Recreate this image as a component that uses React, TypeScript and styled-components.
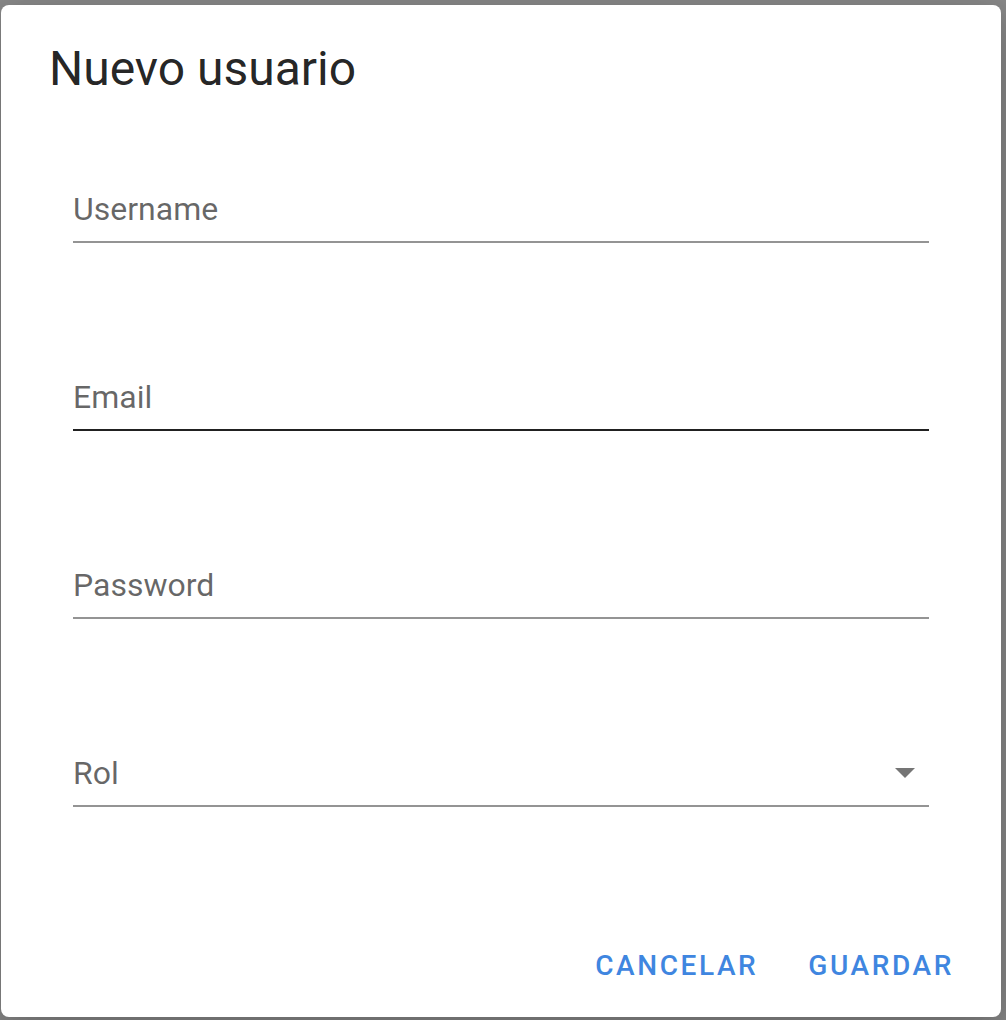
import React from "react";
import styled, { createGlobalStyle } from "styled-components";

const GlobalStyle = createGlobalStyle`
  html, body {
    margin: 0;
    padding: 0;
    background: #8b8b8b;
    font-family: Roboto, "Liberation Sans", Arial, sans-serif;
  }
  * { box-sizing: border-box; }
`;

const Backdrop = styled.div`
  width: 1006px;
  height: 1020px;
  padding: 5px 5px 3px 1px;
  background: #8b8b8b;
  overflow: hidden;
`;

const Dialog = styled.div`
  width: 1000px;
  height: 1012px;
  background: #ffffff;
  border-radius: 8px;
  display: flex;
  flex-direction: column;
  box-shadow: 0 22px 70px 6px rgba(0, 0, 0, 0.14), 0 8px 30px 6px rgba(0, 0, 0, 0.12);
`;

const Title = styled.h2`
  margin: 0;
  padding: 36px 48px 0;
  font-size: 48px;
  line-height: 56px;
  font-weight: 400;
  color: rgba(0, 0, 0, 0.87);
`;

const Content = styled.div`
  padding: 93px 72px 0;
  display: flex;
  flex-direction: column;
  gap: 135px;
`;

const Field = styled.div<{ $active?: boolean }>`
  display: flex;
  align-items: center;
  padding-bottom: 13px;
  border-bottom: 2px solid ${(p) => (p.$active ? "rgba(0,0,0,0.87)" : "rgba(0,0,0,0.42)")};
`;

const Label = styled.span`
  flex: 1;
  font-size: 32px;
  line-height: 38px;
  color: rgba(0, 0, 0, 0.6);
`;

const ArrowIcon = styled.svg`
  width: 48px;
  height: 48px;
  margin: -6px 0 -4px;
  fill: rgba(0, 0, 0, 0.54);
`;

const Actions = styled.div`
  margin-top: auto;
  display: flex;
  justify-content: flex-end;
  gap: 18px;
  padding: 16px 31px 15px 16px;
`;

const TextButton = styled.button`
  border: none;
  background: transparent;
  padding: 12px 16px;
  font-family: Roboto, "Liberation Sans", Arial, sans-serif;
  font-size: 28px;
  line-height: 49px;
  font-weight: 500;
  letter-spacing: 2.6px;
  text-transform: uppercase;
  color: #3f86e0;
  border-radius: 8px;
  cursor: pointer;
`;

const fields = [
  { label: "Username" },
  { label: "Email", active: true },
  { label: "Password" },
  { label: "Rol", select: true },
];

export default function App() {
  return (
    <>
      <GlobalStyle />
      <Backdrop>
        <Dialog>
          <Title>Nuevo usuario</Title>
          <Content>
            {fields.map((f) => (
              <Field key={f.label} $active={f.active}>
                <Label>{f.label}</Label>
                {f.select && (
                  <ArrowIcon viewBox="0 0 24 24">
                    <path d="M7 10l5 5 5-5z" />
                  </ArrowIcon>
                )}
              </Field>
            ))}
          </Content>
          <Actions>
            <TextButton>Cancelar</TextButton>
            <TextButton>Guardar</TextButton>
          </Actions>
        </Dialog>
      </Backdrop>
    </>
  );
}
